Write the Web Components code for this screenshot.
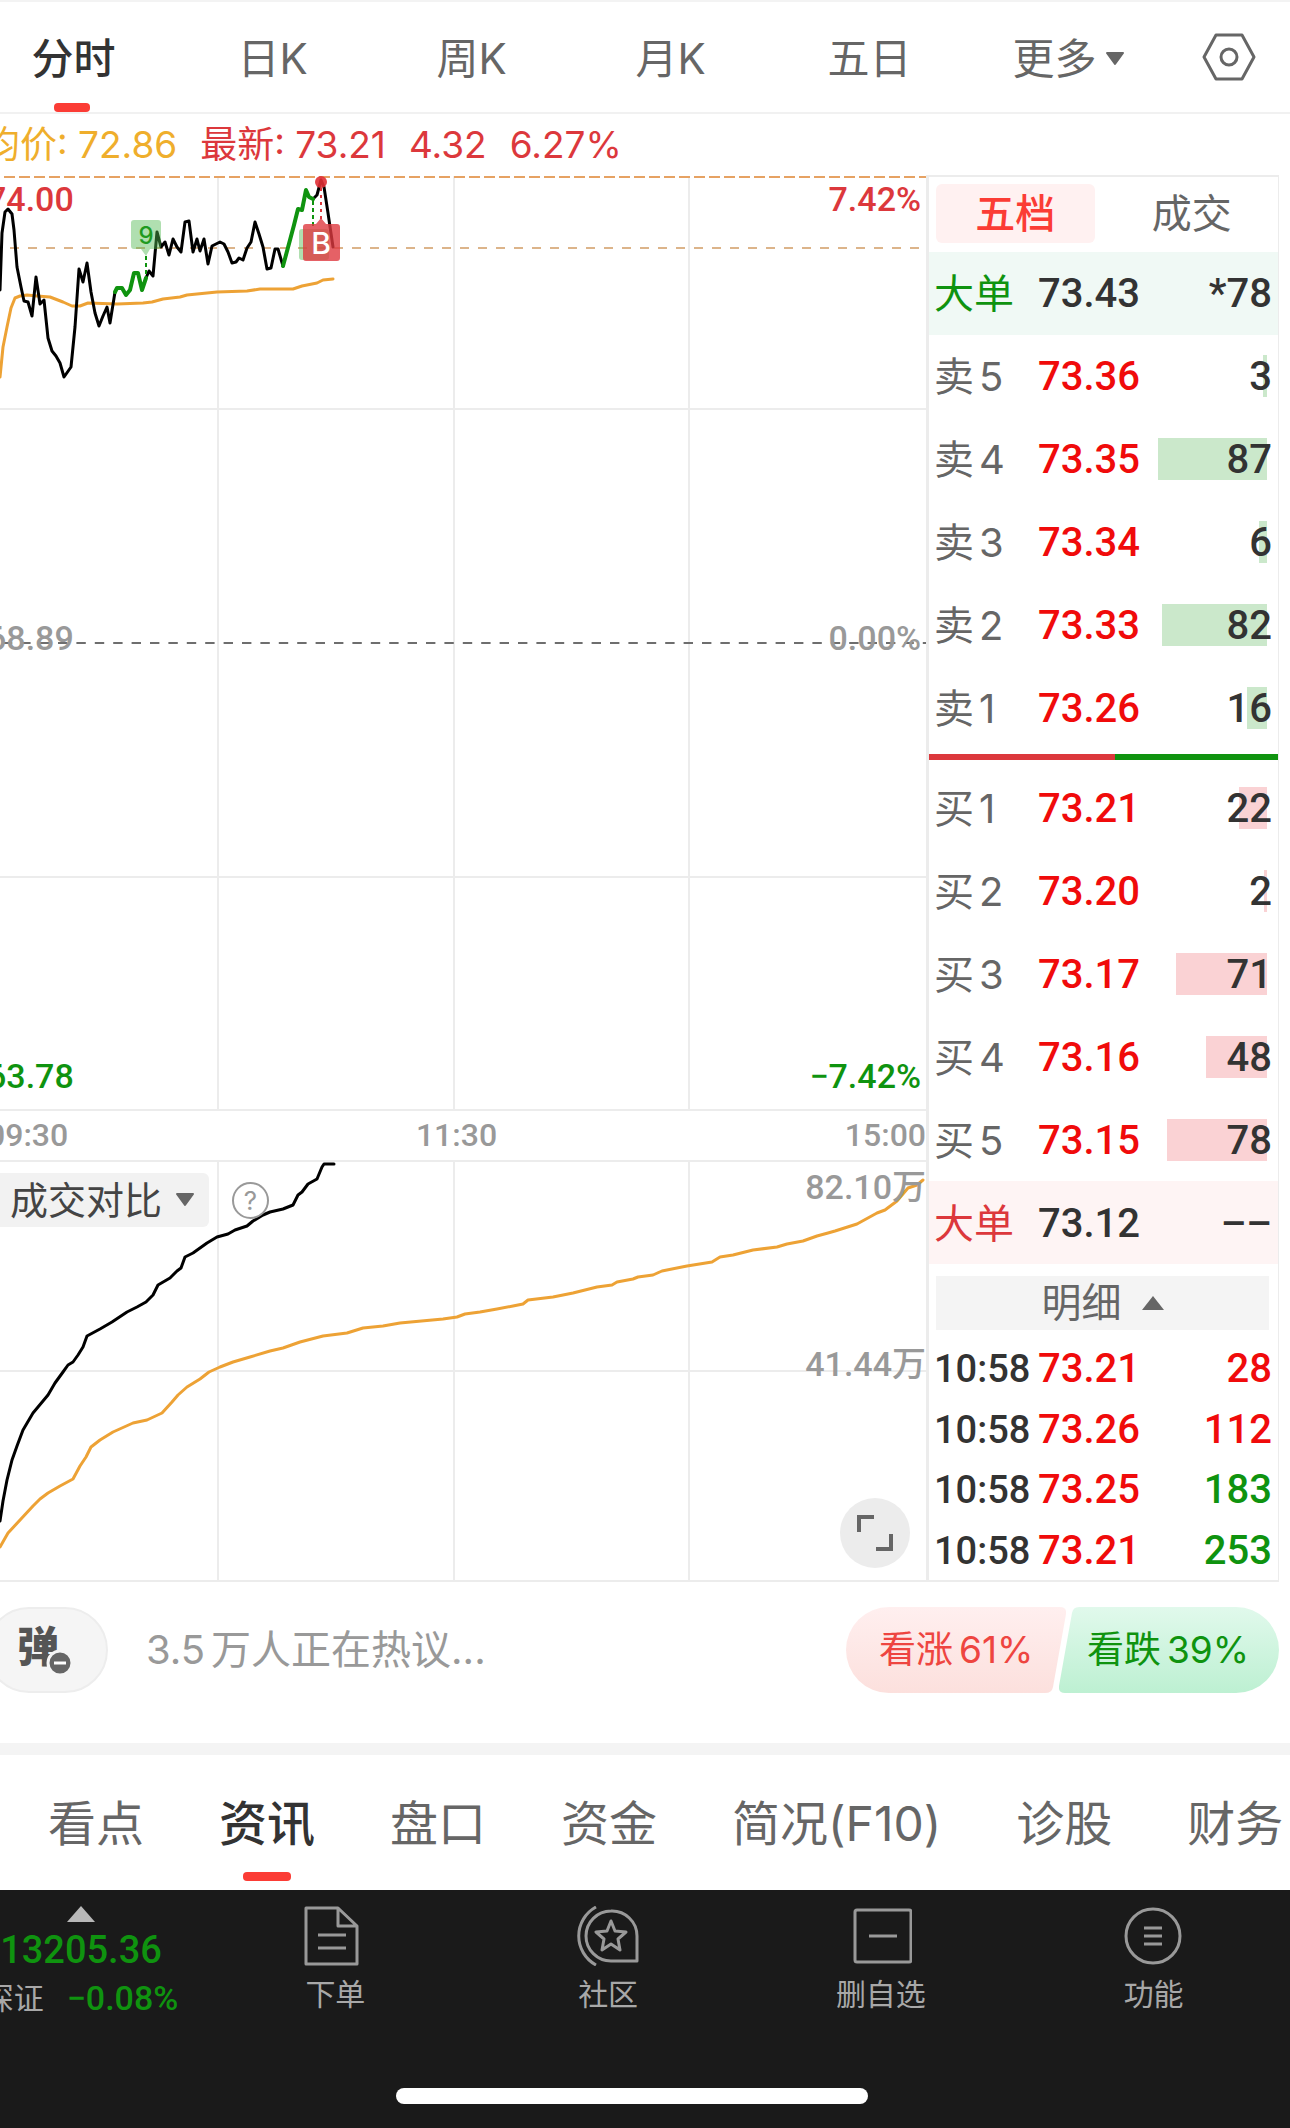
<!DOCTYPE html>
<html lang="zh-CN">
<head>
<meta charset="utf-8">
<title>分时</title>
<style>
  :root {
    --red: #fb3c35;
    --up: #dc383c;
    --price: #f00b0b;
    --down: #0f930f;
    --ink: #333;
    --muted: #666;
    --faint: #999;
    --line: #ececec;
    --num: Roboto, "Noto Sans CJK SC", sans-serif;
  }
  body {
    margin: 0;
    overflow-x: hidden;
    background: #fff;
    font-family: Inter, "Noto Sans CJK SC", sans-serif;
    color: var(--muted);
  }
</style>
</head>
<body>
<stock-page>
  <period-tabs></period-tabs>
  <quote-line></quote-line>
  <market-board>
    <price-chart></price-chart>
    <time-axis></time-axis>
    <volume-chart></volume-chart>
    <order-book slot="side"></order-book>
  </market-board>
  <talk-bar></talk-bar>
  <info-tabs></info-tabs>
  <bottom-bar slot="bottom"></bottom-bar>
</stock-page>

<script>
const reset = `
  :host, * { box-sizing: border-box; }
  button, select { margin: 0; padding: 0; border: 0; background: none; font: inherit; color: inherit; cursor: pointer; }
  a { color: inherit; text-decoration: none; }
  table { border-collapse: collapse; border-spacing: 0; }
  td, th { padding: 0; font-weight: inherit; text-align: left; }
  svg { display: block; }
`;

class BaseElement extends HTMLElement {
  constructor() {
    super();
    this.attachShadow({ mode: 'open' });
  }
  connectedCallback() {
    this.shadowRoot.innerHTML = `<style>${reset}${this.styles()}</style>${this.render()}`;
  }
  styles() { return ''; }
  render() { return '<slot></slot>'; }
}

class StockPage extends BaseElement {
  styles() {
    // the page is a little wider than the window and runs off its left edge
    return `
      :host { display: flex; flex-direction: column; min-height: 100vh; margin-left: -26px; }
      main { flex: none; }
      footer { flex: 1; display: flex; }
      ::slotted([slot="bottom"]) { flex: 1; }
    `;
  }
  render() {
    return `<main><slot></slot></main><footer><slot name="bottom"></slot></footer>`;
  }
}

class PeriodTabs extends BaseElement {
  styles() {
    return `
      :host { display: block; border-top: 2px solid #f3f3f3; border-bottom: 2px solid #f1f1f1; }
      nav { display: grid; grid-template-columns: repeat(6, 1fr) 122px; height: 110px; }
      button { position: relative; display: flex; align-items: center; justify-content: center; gap: 8px; padding-top: 4px; font-size: 42px; line-height: 60px; }
      .on { color: var(--ink); font-weight: 500; }
      .on::after { content: ''; position: absolute; bottom: 0; left: 50%; width: 36px; height: 9px; margin-left: -20px; border-radius: 4px; background: var(--red); }
      .set { padding-top: 0; }
    `;
  }
  render() {
    const tabs = ['分时', '日K', '周K', '月K', '五日'];
    return `<nav>
      ${tabs.map((t, i) => `<button class="${i === 0 ? 'on' : ''}">${t}</button>`).join('')}
      <button>更多<svg width="20" height="14" viewBox="0 0 20 14"><path d="M2 1H18L10 12Z" fill="#666" stroke="#666" stroke-width="2" stroke-linejoin="round"/></svg></button>
      <button class="set" aria-label="设置">
        <svg width="54" height="48" viewBox="0 0 54 48" fill="none" stroke="#666" stroke-width="3" stroke-linejoin="round">
          <path d="M14 2H40L52 24L40 46H14L2 24Z"/><circle cx="27" cy="24" r="8"/>
        </svg>
      </button>
    </nav>`;
  }
}

class QuoteLine extends BaseElement {
  styles() {
    return `
      :host { display: flex; gap: 23px; align-items: center; height: 61px; padding-left: 9px; font-size: 37px; line-height: 52px; color: var(--up); white-space: pre; }
      .avg { color: #efae2c; }
    `;
  }
  render() {
    return `<span class="avg">均价: 72.86</span><span>最新: 73.21</span><span>4.32</span><span>6.27%</span>`;
  }
}

class MarketBoard extends BaseElement {
  styles() {
    return `
      :host { display: flex; margin-right: 11px; border-bottom: 2px solid var(--line); }
      .charts { flex: 1; min-width: 0; }
      .side { flex: none; width: 353px; border: solid var(--line); border-width: 2px 1px 0 3px; }
    `;
  }
  render() {
    return `<div class="charts"><slot></slot></div><div class="side"><slot name="side"></slot></div>`;
  }
}

const labelStyles = `
  .labels { position: absolute; inset: 0; display: flex; justify-content: space-between; pointer-events: none; font: 500 34px/40px var(--num); color: var(--faint); }
  .labels div { display: flex; flex-direction: column; justify-content: space-between; }
  .right { text-align: right; }
`;

class PriceChart extends BaseElement {
  styles() {
    return `
      :host { display: block; position: relative; border-bottom: 2px solid var(--line); }
      svg { width: 100%; height: 934px; }
      ${labelStyles}
      .labels { padding: 4px 5px 13px 13px; }
      .up { color: var(--up); }
      .down { color: var(--down); }
    `;
  }
  render() {
    return `
    <svg viewBox="-26 -2 952 934" preserveAspectRatio="none" fill="none" stroke-linejoin="round" stroke-linecap="round">
      <g stroke="#ececec" stroke-width="2">
        <path d="M218 0V934M454 0V934M689 0V934M-26 232H926M-26 700H926"/>
      </g>
      <g stroke-linecap="butt">
        <path d="M-26 0H926" stroke="#e6a263" stroke-width="2" stroke-dasharray="11 4"/>
        <path d="M-26 71H926" stroke="#dcb48a" stroke-width="2" stroke-dasharray="9 9"/>
        <path d="M-34 466H926" stroke="#6e6e6e" stroke-width="2" stroke-dasharray="9.4 9"/>
      </g>
      <polyline stroke="#eda235" stroke-width="3" points="0,200 3,170 7,150 11,131 15,121 20,119 27,118 37,119 50,120 63,125 72,129 80,129 88,126 117,127 143,126 152,125 163,122 180,120 187,118 217,115 247,114 260,112 293,112 302,109 317,106 323,103 333,102"/>
      <g stroke="#000" stroke-width="3">
        <polyline points="0,113 2,56 5,35 8,32 12,37 14,53 17,90 21,110 24,124 28,125 32,139 36,100 40,127 44,123 48,161 52,174 56,179 60,186 64,200 71,190 75,150 79,92 83,105 87,86 91,115 95,136 99,149 103,139 107,130 110,146 115,115"/>
        <polyline points="146,101 149,94 153,99 157,55 161,70 165,65 169,78 173,62 177,70 181,75 185,45 189,44 193,75 197,62 200,74 204,62 208,87 212,69 220,65 224,67 228,75 232,86 236,85 239,81 243,83 247,71 251,65 255,45 259,57 263,70 267,92 271,91 275,72 278,72 283,89"/>
        <polyline points="313,22 317,18 321,3 324,10 328,36 333,70"/>
      </g>
      <g stroke="#0f930f" stroke-width="4">
        <polyline points="115,115 117,111 122,111 126,118 130,113 134,96 138,96 142,113 146,101"/>
        <polyline points="283,89 290,63 294,48 298,32 302,33 306,13 309,20 313,22"/>
      </g>
      <g stroke="#0f930f" stroke-width="2" stroke-linecap="butt" stroke-dasharray="4 3">
        <path d="M146 79V100M313 24V50"/>
      </g>
      <path d="M134 43H158Q161 43 161 46V69Q161 72 158 72H150L146 79L141 72H134Q131 72 131 69V46Q131 43 134 43Z" fill="#4fb84f" fill-opacity=".45"/>
      <rect x="299" y="52" width="30" height="31" rx="3" fill="#4fb84f" fill-opacity=".45"/>
      <circle cx="321" cy="5" r="6" fill="#e02f35" fill-opacity=".9"/>
      <path d="M321 11V42" stroke="#dc383c" stroke-width="2" stroke-linecap="butt" stroke-dasharray="3 4"/>
      <path d="M306 47H316L321 41L326 47H337Q340 47 340 50V81Q340 84 337 84H306Q303 84 303 81V50Q303 47 306 47Z" fill="#df3a40" fill-opacity=".8"/>
      <g font-family="Inter, sans-serif" text-anchor="middle">
        <text x="146" y="67" font-size="24" font-weight="500" fill="#1f9a1f">9</text>
        <text x="321" y="77" font-size="30" font-weight="500" fill="#fff">B</text>
      </g>
    </svg>
    <div class="labels">
      <div><span class="up">74.00</span><span>68.89</span><span class="down">63.78</span></div>
      <div class="right"><span class="up">7.42%</span><span>0.00%</span><span class="down">−7.42%</span></div>
    </div>`;
  }
}

class TimeAxis extends BaseElement {
  styles() {
    return `
      :host { display: flex; justify-content: space-between; align-items: center; height: 49px; padding: 0 0 2px 13px; font: 500 32px/40px var(--num); color: var(--faint); }
    `;
  }
  render() {
    return `<span>09:30</span><span>11:30</span><span>15:00</span>`;
  }
}

class VolumeChart extends BaseElement {
  styles() {
    return `
      :host { display: block; position: relative; border-top: 2px solid var(--line); }
      .plot { width: 100%; height: 418px; }
      ${labelStyles}
      .labels { justify-content: flex-end; padding: 5px 0 196px; }
      .tools { position: absolute; top: 11px; left: 0; display: flex; align-items: center; gap: 23px; }
      .pick { position: relative; display: block; width: 235px; height: 54px; border-radius: 0 6px 6px 0; background: #f2f2f2; color: #444; }
      select { width: 100%; height: 54px; padding-left: 36px; appearance: none; font-size: 38px; line-height: 54px; }
      .pick svg { position: absolute; right: 14px; top: 20px; pointer-events: none; }
      .help { width: 37px; height: 37px; border: 2px solid var(--faint); border-radius: 50%; font-size: 26px; line-height: 33px; color: var(--faint); }
      .full { position: absolute; right: 16px; bottom: 12px; width: 70px; height: 70px; border-radius: 50%; background: #ececec; }
      .full svg { margin: auto; }
    `;
  }
  render() {
    return `
    <svg class="plot" viewBox="-26 0 952 418" preserveAspectRatio="none" fill="none" stroke-linejoin="round" stroke-linecap="round">
      <path d="M218 0V418M454 0V418M689 0V418M-26 209H926" stroke="#ececec" stroke-width="2"/>
      <polyline stroke="#eda235" stroke-width="3" points="0,385 8,371 33,344 40,337 48,331 60,324 73,317 80,304 86,295 91,285 100,278 113,270 133,261 147,258 162,251 172,240 178,233 187,225 200,217 209,210 220,205 233,200 250,195 270,189 283,186 300,180 323,174 347,171 363,166 383,164 400,161 443,157 457,155 465,152 480,150 497,147 513,144 523,142 528,138 553,135 573,131 597,125 612,123 617,120 633,117 638,115 653,113 662,109 687,104 712,100 720,95 733,93 753,88 777,85 787,82 803,79 817,74 828,71 835,69 857,62 877,51 885,48 897,39 908,26 917,23 923,18"/>
      <polyline stroke="#000" stroke-width="3" points="0,359 3,339 7,318 12,298 17,284 23,268 33,251 48,233 55,221 63,210 68,203 73,200 78,193 83,185 87,174 100,167 112,160 127,150 137,145 146,140 153,133 158,123 170,116 177,109 181,106 185,95 193,91 207,81 217,75 228,72 235,68 247,64 253,59 263,53 270,50 283,47 293,43 298,33 302,30 308,22 317,17 322,5 324,2 334,2"/>
    </svg>
    <div class="labels"><div class="right"><span>82.10万</span><span>41.44万</span></div></div>
    <div class="tools">
      <label class="pick">
        <select aria-label="指标"><option>成交对比</option></select>
        <svg width="20" height="14" viewBox="0 0 20 14"><path d="M2 1H18L10 12Z" fill="#666" stroke="#666" stroke-width="2" stroke-linejoin="round"/></svg>
      </label>
      <button class="help">?</button>
    </div>
    <button class="full" aria-label="全屏">
      <svg width="38" height="38" viewBox="0 0 38 38" fill="none" stroke="#666" stroke-width="4"><path d="M18 3H3V18M35 20V35H20"/></svg>
    </button>`;
  }
}

const sells = [[5, '73.36', 3], [4, '73.35', 87], [3, '73.34', 6], [2, '73.33', 82], [1, '73.26', 16]];
const buys = [[1, '73.21', 22], [2, '73.20', 2], [3, '73.17', 71], [4, '73.16', 48], [5, '73.15', 78]];
const ticks = [['73.21', 28, 'up'], ['73.26', 112, 'up'], ['73.25', 183, 'down'], ['73.21', 253, 'down']];

class OrderBook extends BaseElement {
  styles() {
    return `
      :host { display: block; font-size: 40px; line-height: 50px; }
      .tabs { display: flex; gap: 18px; height: 75px; padding: 7px 7px 9px; }
      .tabs button { flex: 1; border-radius: 6px; }
      .tabs .on { background: #fff1f1; color: var(--red); font-weight: 500; }
      table { width: 100%; table-layout: fixed; }
      .book { height: 497px; }
      .ticks { height: 242px; margin-top: 8px; }
      th { width: 109px; padding: 2px 0 0 5px; }
      td { padding-top: 2px; font-family: var(--num); font-weight: 500; color: var(--ink); }
      td:last-child { text-align: right; padding-right: 6px; }
      .ticks th { font-family: var(--num); font-size: 38px; font-weight: 500; color: var(--ink); }
      .label { display: flex; gap: 5px; }
      td.price, td.up { color: var(--price); }
      td.down { color: var(--down); }
      .bar { background: linear-gradient(var(--c), var(--c)) no-repeat right 11px center / var(--w) 42px; }
      .sell .bar { --c: #cbe8cb; }
      .buy .bar { --c: #fad2d4; }
      .big.sell { background: #f0f9f5; }
      .big.sell th { color: var(--down); }
      .big.buy { background: #fef4f4; }
      .big.buy th { color: var(--up); }
      .ratio { display: flex; height: 6px; margin: 5px 0 7px; }
      .ratio i { flex: 187; background: var(--up); }
      .ratio i + i { flex: 164; background: var(--down); }
      .detail { display: flex; align-items: center; justify-content: center; gap: 20px; width: calc(100% - 16px); height: 54px; margin: 12px 8px 0 7px; background: #f4f4f4; }
    `;
  }
  row(side, name, [level, price, size]) {
    const width = Math.round(size * 1.28);
    return `<tr class="${side}"><th scope="row"><span class="label"><span>${name}</span><span>${level}</span></span></th>
      <td class="price">${price}</td><td class="bar" style="--w:${width}px">${size}</td></tr>`;
  }
  render() {
    return `
    <div class="tabs"><button class="on">五档</button><button>成交</button></div>
    <table class="book">
      <tr class="big sell"><th scope="row">大单</th><td>73.43</td><td>*78</td></tr>
      ${sells.map(r => this.row('sell', '卖', r)).join('')}
    </table>
    <div class="ratio"><i></i><i></i></div>
    <table class="book">
      ${buys.map(r => this.row('buy', '买', r)).join('')}
      <tr class="big buy"><th scope="row">大单</th><td>73.12</td><td>––</td></tr>
    </table>
    <button class="detail">明细<svg width="22" height="14" viewBox="0 0 22 14"><path d="M0 14L11 0L22 14Z" fill="#666"/></svg></button>
    <table class="ticks">
      ${ticks.map(([price, size, dir]) => `<tr><th scope="row">10:58</th><td class="price">${price}</td><td class="${dir}">${size}</td></tr>`).join('')}
    </table>`;
  }
}

class TalkBar extends BaseElement {
  styles() {
    return `
      :host { display: flex; align-items: center; height: 173px; padding: 0 11px 26px 12px; border-bottom: 12px solid #f4f4f4; }
      .danmu { position: relative; width: 122px; height: 86px; border: 2px solid #ededed; border-radius: 43px; background: #f5f5f5; font-size: 42px; font-weight: 900; line-height: 60px; color: #555; text-align: left; padding: 0 0 6px 29px; }
      .danmu svg { position: absolute; left: 58px; top: 40px; }
      .talk { display: flex; gap: 6px; flex: 1; margin-left: 38px; font-size: 40px; line-height: 56px; color: var(--faint); }
      .vote { position: relative; width: 220px; height: 86px; font-size: 37px; line-height: 54px; }
      .vote svg { position: absolute; inset: 0; }
      .vote span { position: relative; display: flex; gap: 6px; }
      .vote b { font-weight: 400; }
      .rise { color: #ee4540; padding-left: 33px; }
      .fall { color: var(--down); margin-left: -7px; padding-left: 28px; }
    `;
  }
  render() {
    return `
    <button class="danmu">弹
      <svg width="28" height="28" viewBox="0 0 28 28"><circle cx="14" cy="14" r="12" fill="#666" stroke="#f5f5f5" stroke-width="3"/><path d="M8 14H20" stroke="#fff" stroke-width="3"/></svg>
    </button>
    <div class="talk"><span>3.5</span><span>万人正在热议...</span></div>
    <button class="vote rise">
      <svg width="220" height="86" viewBox="0 0 220 86">
        <defs><linearGradient id="r" x2="0" y2="1"><stop stop-color="#ffefef"/><stop offset="1" stop-color="#fce0dd"/></linearGradient></defs>
        <path d="M43 0H214Q221 0 220 7L207 80Q206 86 199 86H43A43 43 0 0 1 43 0Z" fill="url(#r)"/>
      </svg>
      <span><b>看涨</b>61%</span>
    </button>
    <button class="vote fall">
      <svg width="220" height="86" viewBox="0 0 220 86">
        <defs><linearGradient id="g" x2="0" y2="1"><stop stop-color="#e1f9ec"/><stop offset="1" stop-color="#bdf0d2"/></linearGradient></defs>
        <path d="M20 0H177A43 43 0 0 1 177 86H6Q-1 86 0 79L13 6Q14 0 20 0Z" fill="url(#g)"/>
      </svg>
      <span><b>看跌</b>39%</span>
    </button>`;
  }
}

class InfoTabs extends BaseElement {
  styles() {
    return `
      :host { display: block; overflow: hidden; }
      nav { display: flex; gap: 75px; height: 135px; padding-left: 74px; }
      a { position: relative; flex: none; font-size: 48px; line-height: 137px; white-space: nowrap; }
      .on { color: var(--ink); font-weight: 500; }
      .on::after { content: ''; position: absolute; left: 50%; bottom: 9px; width: 48px; height: 9px; margin-left: -24px; border-radius: 4px; background: var(--red); }
    `;
  }
  render() {
    const tabs = ['看点', '资讯', '盘口', '资金', '简况(F10)', '诊股', '财务'];
    return `<nav>${tabs.map(t => `<a href="#" class="${t === '资讯' ? 'on' : ''}">${t}</a>`).join('')}</nav>`;
  }
}

class BottomBar extends BaseElement {
  styles() {
    return `
      :host { display: flex; flex-direction: column; justify-content: space-between; min-height: 238px; background: #1a1a1a; color: #a8a8a8; }
      nav { display: grid; grid-template-columns: 225px repeat(4, 1fr); padding-top: 16px; }
      a { display: flex; flex-direction: column; align-items: center; gap: 9px; font-size: 30px; line-height: 38px; }
      .index { gap: 8px; padding-right: 11px; white-space: nowrap; }
      .value { font: 500 38px/40px var(--num); color: var(--down); }
      .sub { display: flex; align-items: center; gap: 23px; }
      .sub b { font: 500 34px/40px var(--num); color: var(--down); }
      .home { width: 472px; height: 16px; margin: 0 auto 24px; border-radius: 8px; background: #fff; }
    `;
  }
  render() {
    const icons = [
      ['下单', '<path d="M2 2H34L53 20V58H2ZM34 2V20H53M14 29H42M14 42H42"/>'],
      ['社区', '<path d="M34 5A25 25 0 0 0 34 55H60V30A25 25 0 0 0 34 5ZM19 1A33 33 0 0 0 19 59M34 15L38 25L49 26L41 33L43 44L34 38L25 44L27 33L19 26L30 25Z"/>'],
      ['删自选', '<rect x="5" y="4" width="56" height="52" rx="2"/><path d="M19 30H47"/>'],
      ['功能', '<circle cx="30" cy="30" r="27"/><path d="M21 22H39M21 30H39M21 38H39"/>']
    ];
    return `
    <nav>
      <a href="#" class="index">
        <svg width="28" height="16" viewBox="0 0 28 16"><path d="M0 16L14 0L28 16Z" fill="#b8b8b8"/></svg>
        <span class="value">13205.36</span>
        <span class="sub"><span>深证</span><b>−0.08%</b></span>
      </a>
      ${icons.map(([name, shape]) => `<a href="#">
        <svg width="62" height="60" viewBox="0 0 62 60" fill="none" stroke="#999" stroke-width="3" stroke-linejoin="round">${shape}</svg>${name}</a>`).join('')}
    </nav>
    <div class="home"></div>`;
  }
}

customElements.define('period-tabs', PeriodTabs);
customElements.define('quote-line', QuoteLine);
customElements.define('price-chart', PriceChart);
customElements.define('time-axis', TimeAxis);
customElements.define('volume-chart', VolumeChart);
customElements.define('order-book', OrderBook);
customElements.define('market-board', MarketBoard);
customElements.define('talk-bar', TalkBar);
customElements.define('info-tabs', InfoTabs);
customElements.define('bottom-bar', BottomBar);
customElements.define('stock-page', StockPage);
</script>
</body>
</html>
